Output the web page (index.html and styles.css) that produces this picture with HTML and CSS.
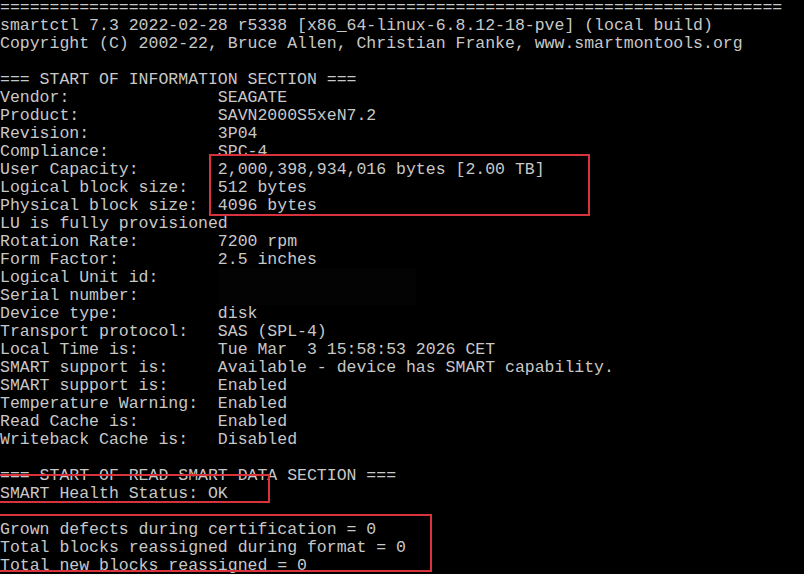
FILE: index.html
```html
<!DOCTYPE html>
<html>
<head>
<meta charset="utf-8">
<link rel="stylesheet" href="styles.css">
</head>
<body>
<div class="term">
<pre class="out">===============================================================================
smartctl 7.3 2022-02-28 r5338 [x86_64-linux-6.8.12-18-pve] (local build)
Copyright (C) 2002-22, Bruce Allen, Christian Franke, www.smartmontools.org

=== START OF INFORMATION SECTION ===
Vendor:               SEAGATE
Product:              SAVN2000S5xeN7.2
Revision:             3P04
Compliance:           SPC-4
User Capacity:        2,000,398,934,016 bytes [2.00 TB]
Logical block size:   512 bytes
Physical block size:  4096 bytes
LU is fully provisioned
Rotation Rate:        7200 rpm
Form Factor:          2.5 inches
Logical Unit id:      <span class="redact">                    </span>
Serial number:        <span class="redact">                    </span>
Device type:          disk
Transport protocol:   SAS (SPL-4)
Local Time is:        Tue Mar  3 15:58:53 2026 CET
SMART support is:     Available - device has SMART capability.
SMART support is:     Enabled
Temperature Warning:  Enabled
Read Cache is:        Enabled
Writeback Cache is:   Disabled

=== START OF READ SMART DATA SECTION ===
SMART Health Status: OK

Grown defects during certification = 0
Total blocks reassigned during format = 0
Total new blocks reassigned = 0</pre>
<div class="mark mark-capacity"></div>
<div class="mark mark-health"></div>
<div class="mark mark-defects"></div>
</div>
</body>
</html>
```
FILE: styles.css
```css
html, body {
  margin: 0;
  padding: 0;
  background: #000;
  overflow: hidden;
}
.term {
  position: relative;
  width: 804px;
  height: 574px;
  overflow: hidden;
  background: #000;
}
.out {
  margin: -1px 0 0 0;
  padding: 0;
  font-family: "Liberation Mono", "Courier New", monospace;
  font-size: 16.5px;
  line-height: 18px;
  color: #c8c8c8;
  white-space: pre;
}
.redact {
  background: #030303;
}
.mark {
  position: absolute;
  border: 2px solid #d8323d;
  box-sizing: border-box;
}
.mark-capacity {
  left: 209px;
  top: 154px;
  width: 381px;
  height: 62px;
}
.mark-health {
  left: -2px;
  top: 474px;
  width: 272px;
  height: 29px;
}
.mark-defects {
  left: -2px;
  top: 514px;
  width: 434px;
  height: 58px;
}
```
